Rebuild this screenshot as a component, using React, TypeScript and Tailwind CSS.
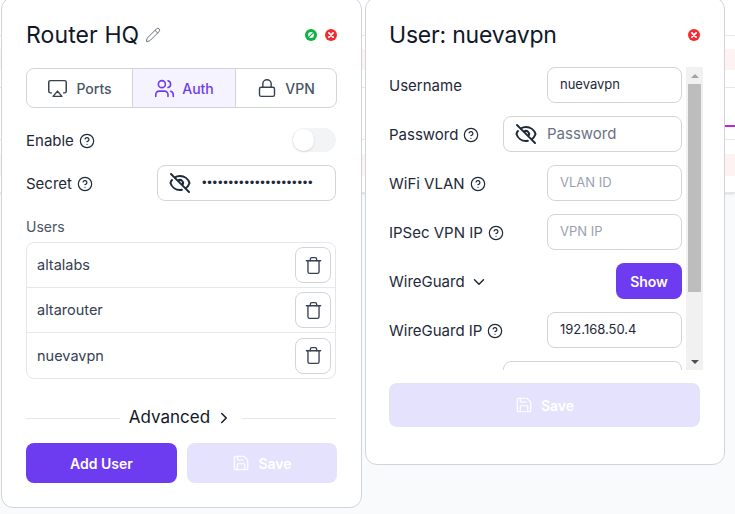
import { Airplay, ChevronDown, ChevronRight, CircleHelp, Lock, Pencil, Save, Trash, Users } from "lucide-react"
import { HiOutlineEyeOff } from "react-icons/hi"

const font = { fontFamily: "Inter, 'Noto Sans', sans-serif" }

function Help() {
    return <CircleHelp size={16} strokeWidth={1.8} className="text-gray-800 shrink-0" />
}

function RedClose() {
    return (
        <svg width="12" height="12" viewBox="0 0 12 12">
            <circle cx="6" cy="6" r="6" fill="#f42a2f" />
            <path d="M3.9 3.9l4.2 4.2M8.1 3.9L3.9 8.1" stroke="#fff" strokeWidth="1.8" strokeLinecap="round" />
        </svg>
    )
}

function GreenOk() {
    return (
        <svg width="12" height="12" viewBox="0 0 12 12">
            <circle cx="6" cy="6" r="6" fill="#0db341" />
            <circle cx="6" cy="6" r="2.9" fill="#fff" />
            <path d="M3.8 8.2l4.4-4.4" stroke="#0db341" strokeWidth="1.2" />
        </svg>
    )
}

function Field({ label, help, wide, value, placeholder, eye }: {
    label: string
    help?: boolean
    wide?: boolean
    value?: string
    placeholder?: string
    eye?: boolean
}) {
    return (
        <div className="flex items-center justify-between h-9 shrink-0">
            <div className="flex items-center gap-[5px] pt-[2px] text-[15px] text-gray-800">
                {label}
                {help && <Help />}
            </div>
            <div className={`h-9 bg-white border border-[#d1d5db] rounded-lg flex items-center text-[13px] ${wide ? "w-[179px] pl-[10px]" : "w-[135px] pl-[12px]"}`}>
                {eye && <HiOutlineEyeOff size={24} className="text-gray-800 mr-[9px] shrink-0" />}
                {value && <span className="text-gray-800">{value}</span>}
                {placeholder && <span className={eye ? "text-[15px] text-gray-500" : "text-gray-400"}>{placeholder}</span>}
            </div>
        </div>
    )
}

function UserRow({ name, last }: { name: string; last?: boolean }) {
    return (
        <div className={`h-[45px] flex items-center justify-between pl-[10px] pr-[4px] text-[14.5px] text-gray-700 ${last ? "" : "border-b border-gray-200"}`}>
            {name}
            <div className="w-9 h-9 flex items-center justify-center bg-white border border-[#d1d5db] rounded-lg">
                <Trash size={19} strokeWidth={1.7} className="text-gray-700" />
            </div>
        </div>
    )
}

function SaveButton({ className }: { className: string }) {
    return (
        <div className={`flex items-center justify-center gap-2 rounded-lg bg-[#e5e2fd] text-white text-[14px] font-semibold ${className}`}>
            <Save size={18} strokeWidth={1.5} />
            Save
        </div>
    )
}

export default function App() {
    return (
        <div className="relative w-[735px] h-[514px] overflow-hidden bg-[#f9fafb]" style={font}>
            {/* Table behind the popups */}
            <div className="h-[193px] bg-white border-b border-gray-200 shadow-sm">
                <div className="h-9 border-b border-gray-200"></div>
                <div className="h-[52px] border-b border-gray-200 pt-[13px]">
                    <div className="h-[21px] bg-[#fef2f2]"></div>
                </div>
                <div className="h-[52px] border-b border-gray-200 flex justify-end items-end pb-[12px]">
                    <div className="w-[10px] h-[2px] bg-[#c026d3]"></div>
                </div>
                <div className="pt-[14px]">
                    <div className="h-[22px] bg-[#fef2f2]"></div>
                </div>
            </div>

            {/* Popups */}
            <div className="absolute top-[-3px] left-[1px] flex items-start gap-[3px]">
                {/* Router card */}
                <div className="w-[361px] h-[511px] bg-white border border-[#d1d5db] rounded-xl px-[24px] flex flex-col">
                    <div className="flex items-center justify-between h-[30px] mt-[22px]">
                        <div className="flex items-center gap-[6px]">
                            <span className="text-[23px] tracking-[0.1px] text-gray-900">Router HQ</span>
                            <Pencil size={16} strokeWidth={1.5} className="text-gray-500" />
                        </div>
                        <div className="flex items-center gap-[8px]">
                            <GreenOk />
                            <RedClose />
                        </div>
                    </div>

                    <div className="mt-[18px] w-[311px] h-10 flex border border-[#d1d5db] rounded-lg overflow-hidden text-[14px] font-medium shrink-0">
                        <div className="w-[105px] flex items-center justify-center gap-[8px] text-gray-600">
                            <Airplay size={21} strokeWidth={1.7} className="text-gray-700" />
                            Ports
                        </div>
                        <div className="w-[104px] flex items-center justify-center gap-[7px] bg-[#f5f3ff] text-[#6d3bf0] border-x border-[#d1d5db]">
                            <Users size={21} strokeWidth={1.8} />
                            Auth
                        </div>
                        <div className="flex-1 flex items-center justify-center gap-[8px] text-gray-600">
                            <Lock size={20} strokeWidth={1.7} className="text-gray-700" />
                            VPN
                        </div>
                    </div>

                    <div className="mt-[20px] flex items-center justify-between h-6 w-[310px]">
                        <div className="flex items-center gap-[5px] pt-[2px] text-[15px] text-gray-800">Enable <Help /></div>
                        <div className="w-11 h-6 rounded-full bg-gray-100 p-[1px]">
                            <div className="w-[21px] h-[22px] rounded-full bg-white shadow"></div>
                        </div>
                    </div>

                    <div className="mt-[13px] w-[310px]">
                        <div className="flex items-center justify-between h-9">
                            <div className="flex items-center gap-[5px] pt-[2px] text-[15px] text-gray-800">Secret <Help /></div>
                            <div className="w-[179px] h-9 bg-white border border-[#d1d5db] rounded-lg flex items-center pl-[10px]">
                                <HiOutlineEyeOff size={24} className="text-gray-800 mr-[10px] shrink-0" />
                                <span className="font-['Liberation_Sans'] text-[13px] tracking-[0.75px] text-gray-800">•••••••••••••••••••••</span>
                            </div>
                        </div>
                    </div>

                    <div className="mt-[16px] text-[14px] text-gray-600 leading-5">Users</div>
                    <div className="mt-[5px] w-[310px] border border-gray-200 rounded-lg">
                        <UserRow name="altalabs" />
                        <UserRow name="altarouter" />
                        <UserRow name="nuevavpn" last />
                    </div>

                    <div className="mt-[28px] w-[310px] flex items-center gap-[8px] h-[22px]">
                        <div className="w-[94px] h-px bg-gray-200"></div>
                        <div className="flex-1 flex items-center justify-center gap-[5px] text-[17px] text-gray-900">
                            Advanced
                            <ChevronRight size={18} strokeWidth={2} />
                        </div>
                        <div className="w-[94px] h-px bg-gray-200"></div>
                    </div>

                    <div className="mt-[14px] flex gap-[10px]">
                        <div className="w-[151px] h-10 flex items-center justify-center rounded-lg bg-[#6d3bf0] text-white text-[14px] font-semibold">Add User</div>
                        <SaveButton className="w-[150px] h-10" />
                    </div>
                </div>

                {/* User card */}
                <div className="w-[360px] h-[468px] bg-white border border-[#d1d5db] rounded-xl pl-[23px] flex flex-col">
                    <div className="flex items-center justify-between h-[30px] mt-[22px] pr-[24px]">
                        <span className="text-[23px] tracking-[-0.2px] text-gray-900">User: nuevavpn</span>
                        <RedClose />
                    </div>
                    <div className="mt-[17px] flex h-[303px] overflow-hidden">
                        <div className="w-[293px] flex flex-col gap-[13px]">
                            <Field label="Username" value="nuevavpn" />
                            <Field label="Password" help wide placeholder="Password" eye />
                            <Field label="WiFi VLAN" help placeholder="VLAN ID" />
                            <Field label="IPSec VPN IP" help placeholder="VPN IP" />
                            <div className="flex items-center justify-between h-9 shrink-0">
                                <div className="flex items-center gap-[5px] pt-[2px] text-[15px] text-gray-800">
                                    WireGuard
                                    <ChevronDown size={18} strokeWidth={2} />
                                </div>
                                <div className="w-[66px] h-9 flex items-center justify-center rounded-lg bg-[#6d3bf0] text-white text-[14px] font-semibold">Show</div>
                            </div>
                            <Field label="WireGuard IP" help value="192.168.50.4" />
                            <div className="self-end w-[179px] h-9 bg-white border border-[#d1d5db] rounded-lg shrink-0"></div>
                        </div>
                        {/* Scrollbar */}
                        <div className="ml-[4px] w-[17px] bg-[#f1f1f1] flex flex-col items-center">
                            <div className="h-[17px] flex items-center">
                                <div className="w-0 h-0 border-x-[4px] border-x-transparent border-b-[4px] border-b-[#a3a3a3]"></div>
                            </div>
                            <div className="w-[13px] h-[208px] bg-[#bdbdbd]"></div>
                            <div className="flex-1"></div>
                            <div className="h-[17px] flex items-center">
                                <div className="w-0 h-0 border-x-[4px] border-x-transparent border-t-[4px] border-t-[#505050]"></div>
                            </div>
                        </div>
                    </div>
                    <SaveButton className="mt-[13px] w-[311px] h-11" />
                </div>
            </div>
        </div>
    )
}
